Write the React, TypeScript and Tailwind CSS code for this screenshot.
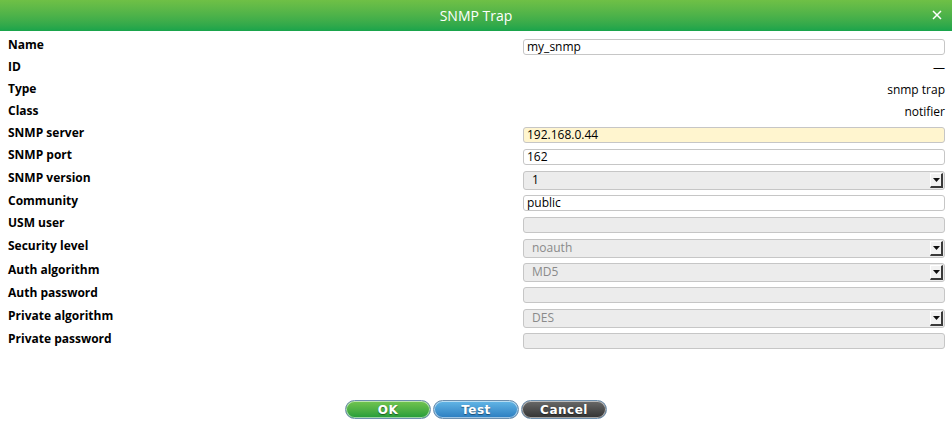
import React from "react";

type Row =
  | { label: string; kind: "text"; value: string; tone?: "white" | "yellow" | "off" }
  | { label: string; kind: "static"; value: string }
  | { label: string; kind: "select"; value: string; off?: boolean };

const rows: Row[] = [
  { label: "Name", kind: "text", value: "my_snmp" },
  { label: "ID", kind: "static", value: "—" },
  { label: "Type", kind: "static", value: "snmp trap" },
  { label: "Class", kind: "static", value: "notifier" },
  { label: "SNMP server", kind: "text", value: "192.168.0.44", tone: "yellow" },
  { label: "SNMP port", kind: "text", value: "162" },
  { label: "SNMP version", kind: "select", value: "1" },
  { label: "Community", kind: "text", value: "public" },
  { label: "USM user", kind: "text", value: "", tone: "off" },
  { label: "Security level", kind: "select", value: "noauth", off: true },
  { label: "Auth algorithm", kind: "select", value: "MD5", off: true },
  { label: "Auth password", kind: "text", value: "", tone: "off" },
  { label: "Private algorithm", kind: "select", value: "DES", off: true },
  { label: "Private password", kind: "text", value: "", tone: "off" },
];

function Field({ row }: { row: Row }) {
  if (row.kind === "static") {
    return <div className="-mt-[3px] text-right text-[12px] text-black">{row.value}</div>;
  }
  if (row.kind === "select") {
    return (
      <div className="flex h-[19px] items-center justify-between rounded-[3px] border border-[#c6c6c6] bg-[#ececec] pl-[8px] pr-[1px]">
        <span className={row.off ? "text-[12px] text-[#8a8a8a]" : "text-[12px] text-black"}>{row.value}</span>
        <span className="flex h-[15px] w-[13px] items-center justify-center border-b-2 border-r-2 border-l border-t border-b-[#3a3a3a] border-r-[#3a3a3a] border-l-white border-t-white bg-[#f2f2f2]">
          <svg width="7" height="4" viewBox="0 0 7 4">
            <path d="M0 0h7L3.5 4z" fill="#111" />
          </svg>
        </span>
      </div>
    );
  }
  const bg =
    row.tone === "yellow" ? "bg-[#fff5cf]" : row.tone === "off" ? "bg-[#ececec]" : "bg-white";
  return (
    <div className={`flex h-[16px] items-center rounded-[3px] border border-[#c6c6c6] pl-[3px] text-[12px] text-black ${bg}`}>
      {row.value}
    </div>
  );
}

function Btn({ label, tone }: { label: string; tone: string }) {
  return (
    <button
      className={`h-[19px] w-[86px] rounded-full border border-[#6d8fae] text-[12px] font-bold tracking-[0.5px] text-white shadow-[inset_0_0_0_1px_rgba(255,255,255,0.55)] [font-family:'DejaVu_Sans',sans-serif] [text-shadow:0_1px_1px_rgba(0,0,0,0.45)] ${tone}`}
    >
      {label}
    </button>
  );
}

export default function App() {
  return (
    <div className="flex h-[435px] w-[952px] flex-col bg-white [font-family:'Open_Sans',sans-serif]">
      <div className="relative flex h-[31px] items-center justify-center bg-gradient-to-b from-[#6fc046] to-[#17a44b]">
        <span className="text-[14px] text-white">SNMP Trap</span>
        <svg className="absolute right-[10px] top-[10px]" width="10" height="10" viewBox="0 0 10 10">
          <path d="M1 1l8 8M9 1l-8 8" stroke="white" strokeWidth="1.5" />
        </svg>
      </div>

      <div className="pl-[8px] pr-[7px] pt-[5px]">
        {rows.map((row) => (
          <div
            key={row.label}
            className={`grid grid-cols-[515px_1fr] items-center ${row.kind === "select" ? "h-[24px]" : "h-[22px]"}`}
          >
            <span className="-mt-[4px] text-[12px] font-bold text-black">{row.label}</span>
            <Field row={row} />
          </div>
        ))}
      </div>

      <div className="flex-1" />

      <div className="flex justify-center gap-[2px] pb-[16px]">
        <Btn label="OK" tone="bg-gradient-to-b from-[#72c550] to-[#1f9c3a]" />
        <Btn label="Test" tone="bg-gradient-to-b from-[#63b6e6] to-[#2a7dc0]" />
        <Btn label="Cancel" tone="bg-gradient-to-b from-[#6a6a6a] to-[#333333]" />
      </div>
    </div>
  );
}
